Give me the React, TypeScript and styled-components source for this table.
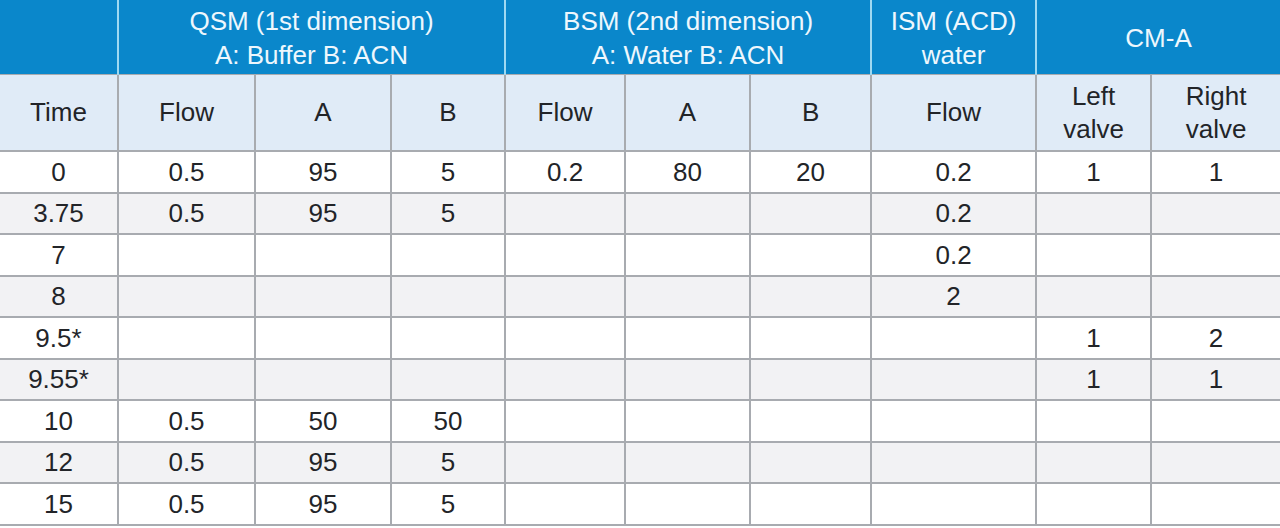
import React from "react";
import styled, { createGlobalStyle } from "styled-components";

const Global = createGlobalStyle`
  html, body { margin: 0; padding: 0; background: #ffffff; }
  body { font-family: "Liberation Sans", Arial, sans-serif; }
`;

const Table = styled.table`
  width: 1280px;
  border-collapse: collapse;
  table-layout: fixed;
  font-family: "Liberation Sans", Arial, sans-serif;
  font-size: 26px;
  color: #222428;
  border-bottom: 2px solid #a4a6aa;
`;

const GroupCell = styled.th`
  background: #0a87cb;
  color: #eef7fd;
  font-weight: 400;
  line-height: 34px;
  height: 72px;
  padding: 2px 4px 0;
  text-align: center;
  vertical-align: middle;
  border-left: 2px solid #9fd9f2;
  &:first-child { border-left: none; }
`;

const SubCell = styled.th`
  background: #e0ebf7;
  font-weight: 400;
  line-height: 33px;
  height: 75px;
  padding: 0 4px;
  text-align: center;
  vertical-align: middle;
  border: 2px solid #a8abb0;
  border-top: 1px solid #a8abb0;
  &:first-child { border-left: none; }
  &:last-child { border-right: none; }
`;

const Row = styled.tr<{ $alt: boolean }>`
  background: ${(p) => (p.$alt ? "#f2f2f4" : "#ffffff")};
`;

const Cell = styled.td`
  height: 39.5px;
  padding: 0 4px;
  text-align: center;
  vertical-align: middle;
  line-height: 24px;
  border: 2px solid #a8abb0;
  &:first-child { border-left: none; }
  &:last-child { border-right: none; }
`;

const widths = [118, 137, 136, 114, 120, 125, 121, 165, 115, 129];

const rows: string[][] = [
  ["0", "0.5", "95", "5", "0.2", "80", "20", "0.2", "1", "1"],
  ["3.75", "0.5", "95", "5", "", "", "", "0.2", "", ""],
  ["7", "", "", "", "", "", "", "0.2", "", ""],
  ["8", "", "", "", "", "", "", "2", "", ""],
  ["9.5*", "", "", "", "", "", "", "", "1", "2"],
  ["9.55*", "", "", "", "", "", "", "", "1", "1"],
  ["10", "0.5", "50", "50", "", "", "", "", "", ""],
  ["12", "0.5", "95", "5", "", "", "", "", "", ""],
  ["15", "0.5", "95", "5", "", "", "", "", "", ""],
];

export default function App() {
  return (
    <>
      <Global />
      <Table>
        <colgroup>
          {widths.map((w, i) => (
            <col key={i} style={{ width: w }} />
          ))}
        </colgroup>
        <thead>
          <tr>
            <GroupCell />
            <GroupCell colSpan={3}>
              QSM (1st dimension)
              <br />
              A: Buffer B: ACN
            </GroupCell>
            <GroupCell colSpan={3}>
              BSM (2nd dimension)
              <br />
              A: Water B: ACN
            </GroupCell>
            <GroupCell>
              ISM (ACD)
              <br />
              water
            </GroupCell>
            <GroupCell colSpan={2}>CM-A</GroupCell>
          </tr>
          <tr>
            <SubCell>Time</SubCell>
            <SubCell>Flow</SubCell>
            <SubCell>A</SubCell>
            <SubCell>B</SubCell>
            <SubCell>Flow</SubCell>
            <SubCell>A</SubCell>
            <SubCell>B</SubCell>
            <SubCell>Flow</SubCell>
            <SubCell>
              Left
              <br />
              valve
            </SubCell>
            <SubCell>
              Right
              <br />
              valve
            </SubCell>
          </tr>
        </thead>
        <tbody>
          {rows.map((r, i) => (
            <Row key={i} $alt={i % 2 === 1}>
              {r.map((c, j) => (
                <Cell key={j}>{c}</Cell>
              ))}
            </Row>
          ))}
        </tbody>
      </Table>
    </>
  );
}
